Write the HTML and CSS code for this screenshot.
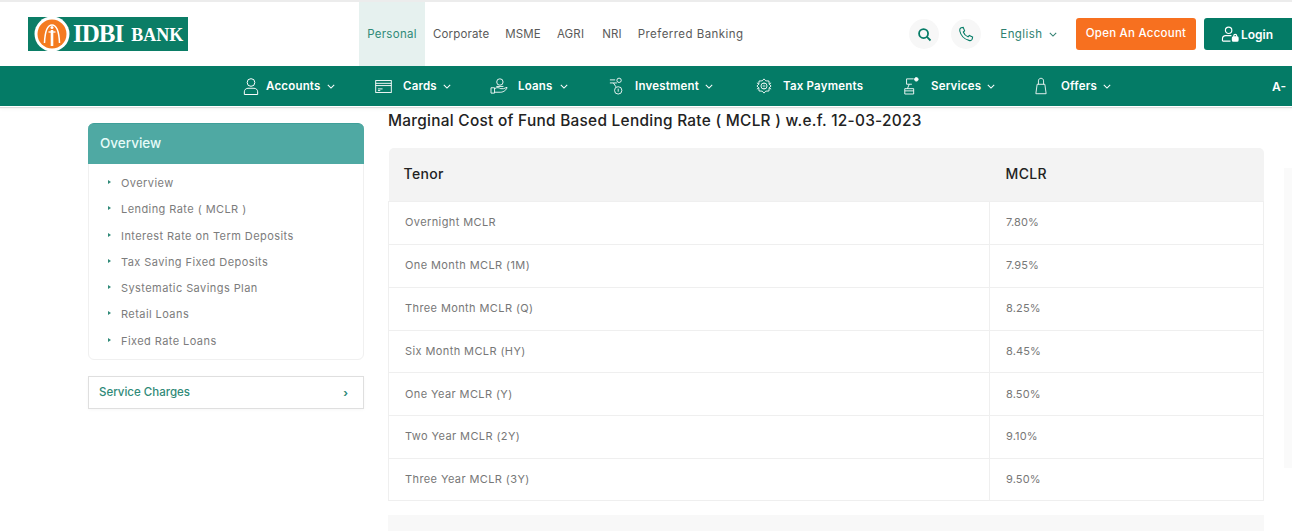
FILE: index.html
```html
<!DOCTYPE html>
<html lang="en">
<head>
    <meta charset="UTF-8">
    <meta name="viewport" content="width=device-width, initial-scale=1.0">
    <title>IDBI Bank - MCLR</title>
    <link rel="stylesheet" href="styles.css">
</head>
<body>
    <header class="top-bar">
        <a class="logo" href="#">
            <svg class="logo-mark" viewBox="0 0 36 36" width="36" height="36">
                <circle cx="18" cy="18" r="17.5" fill="#fff"/>
                <circle cx="18" cy="18" r="14.5" fill="#f47b20"/>
                <path d="M10.5 27 C11 14 14 9 18 9 C22 9 25 14 25.5 27" fill="none" stroke="#fff" stroke-width="1.5"/>
                <path d="M18 14 V30" stroke="#fff" stroke-width="2.6"/>
                <path d="M14.5 16 H21.5" stroke="#fff" stroke-width="1.3"/>
                <circle cx="18" cy="11.5" r="1.5" fill="#fff"/>
            </svg>
            <span class="logo-idbi">IDBI</span>
            <span class="logo-bank">BANK</span>
        </a>
        <nav class="segments">
            <a class="segment active" href="#">Personal</a>
            <a class="segment" href="#">Corporate</a>
            <a class="segment" href="#">MSME</a>
            <a class="segment" href="#">AGRI</a>
            <a class="segment seg-nri" href="#">NRI</a>
            <a class="segment seg-pref" href="#">Preferred Banking</a>
        </nav>
        <div class="top-actions">
            <span class="round-btn">
                <svg viewBox="0 0 16 16" width="15" height="15" fill="none" stroke="#047b66" stroke-width="1.9"><circle cx="7" cy="7" r="4.8"/><path d="M10.6 10.6 L14.4 14.4"/></svg>
            </span>
            <span class="round-btn">
                <svg viewBox="0 0 16 16" width="16" height="16" fill="none" stroke="#047b66" stroke-width="1.1"><path d="M3 1.8 L5.2 1.4 L6.6 4.8 L5.3 6 C6 8 7.8 10 10 10.8 L11.3 9.5 L14.6 11 L14.2 13.2 C13.8 14.4 12.4 14.8 11 14.4 C6.6 13.2 2.8 9.4 1.8 5 C1.5 3.6 2 2.4 3 1.8 Z"/></svg>
            </span>
            <a class="lang" href="#">English <svg class="chev" viewBox="0 0 10 6" width="8" height="5"><path d="M1 1 L5 5 L9 1" fill="none" stroke="currentColor" stroke-width="1.3"/></svg></a>
            <a class="btn-open" href="#">Open An Account</a>
            <a class="btn-login" href="#">
                <svg viewBox="0 0 20 18" width="19" height="17" fill="none" stroke="#fff" stroke-width="1.2"><circle cx="8" cy="4.6" r="3.4"/><path d="M1.5 16 V13.5 C1.5 11.5 3 10.2 5 10.2 H11 M1.5 16 H10"/><rect x="12" y="11.5" width="6" height="4.5" rx="1" fill="#fff"/><path d="M13.5 11.5 V10 C13.5 8.4 16.5 8.4 16.5 10 V11.5"/></svg>
                Login
            </a>
        </div>
    </header>

    <nav class="main-nav">
        <ul class="nav-list">
            <li class="nav-item w-accounts">
                <svg viewBox="0 0 18 20" width="16" height="19" fill="none" stroke="#fff" stroke-width="1.1"><circle cx="9" cy="5.5" r="4.3"/><path d="M1.5 19 V16 C1.5 13.6 3.4 12 5.6 12 H12.4 C14.6 12 16.5 13.6 16.5 16 V19 Z"/></svg>
                Accounts <svg class="chev" viewBox="0 0 10 6" width="8" height="5"><path d="M1 1 L5 5 L9 1" fill="none" stroke="currentColor" stroke-width="1.3"/></svg>
            </li>
            <li class="nav-item w-cards">
                <svg viewBox="0 0 18 14" width="17" height="13" fill="none" stroke="#fff" stroke-width="1"><rect x="0.6" y="0.6" width="16.8" height="12.8"/><path d="M0.6 3.6 H17.4 M0.6 6 H17.4 M3 9.6 H8 M3 11.4 H5.5"/></svg>
                Cards <svg class="chev" viewBox="0 0 10 6" width="8" height="5"><path d="M1 1 L5 5 L9 1" fill="none" stroke="currentColor" stroke-width="1.3"/></svg>
            </li>
            <li class="nav-item w-loans">
                <svg viewBox="0 0 20 18" width="18" height="16" fill="none" stroke="#fff" stroke-width="1"><circle cx="11" cy="4.5" r="3.6"/><path d="M7 9.5 H15 M1 11 H5 V17 H1 Z M5 12 C8 10 10 11 12 12 H15 L19 10.5 C19 13 15 16 12 16 H5"/></svg>
                Loans <svg class="chev" viewBox="0 0 10 6" width="8" height="5"><path d="M1 1 L5 5 L9 1" fill="none" stroke="currentColor" stroke-width="1.3"/></svg>
            </li>
            <li class="nav-item w-invest">
                <svg viewBox="0 0 16 20" width="14" height="18" fill="none" stroke="#fff" stroke-width="1"><circle cx="11.5" cy="3.5" r="2.5"/><circle cx="10.5" cy="15" r="4.2"/><path d="M1 3 H7 M1 6.5 H9 M5 6.5 L8 11 M10.5 13 V16.5"/></svg>
                Investment <svg class="chev" viewBox="0 0 10 6" width="8" height="5"><path d="M1 1 L5 5 L9 1" fill="none" stroke="currentColor" stroke-width="1.3"/></svg>
            </li>
            <li class="nav-item w-tax">
                <svg viewBox="0 0 18 18" width="16" height="16" fill="none" stroke="#fff" stroke-width="1"><circle cx="9" cy="9" r="3.4"/><path d="M9 5.6 V7 M9 11 V12.4 M7.5 9 H10.5"/><path d="M9 1 L11 3.2 L14.6 3.4 L14.8 7 L17 9 L14.8 11 L14.6 14.6 L11 14.8 L9 17 L7 14.8 L3.4 14.6 L3.2 11 L1 9 L3.2 7 L3.4 3.4 L7 3.2 Z"/><path d="M1 5.5 L3.4 7 M17 5.5 L14.8 7 M1 12.5 L3.2 11 M17 12.5 L14.8 11"/></svg>
                Tax Payments
            </li>
            <li class="nav-item w-services">
                <svg viewBox="0 0 18 20" width="16" height="18" fill="none" stroke="#fff" stroke-width="1"><path d="M2 13 H12 V19 H2 Z M4 2 H12 M4 2 V8 H10 M5 13 L7 8 M2 15.5 H12"/><circle cx="15" cy="2.5" r="2" fill="#fff"/></svg>
                Services <svg class="chev" viewBox="0 0 10 6" width="8" height="5"><path d="M1 1 L5 5 L9 1" fill="none" stroke="currentColor" stroke-width="1.3"/></svg>
            </li>
            <li class="nav-item w-offers">
                <svg viewBox="0 0 14 20" width="12" height="18" fill="none" stroke="#fff" stroke-width="1"><path d="M2.5 8 L1 19 H13 L11.5 8 Z M4 8 V4 C4 0 10 0 10 4 V8"/></svg>
                Offers <svg class="chev" viewBox="0 0 10 6" width="8" height="5"><path d="M1 1 L5 5 L9 1" fill="none" stroke="currentColor" stroke-width="1.3"/></svg>
            </li>
        </ul>
        <span class="font-size">A-</span>
    </nav>

    <main class="page">
        <aside class="sidebar">
            <div class="side-card">
                <h3 class="side-title">Overview</h3>
                <ul class="side-list">
                    <li>Overview</li>
                    <li>Lending Rate ( MCLR )</li>
                    <li>Interest Rate on Term Deposits</li>
                    <li>Tax Saving Fixed Deposits</li>
                    <li>Systematic Savings Plan</li>
                    <li>Retail Loans</li>
                    <li>Fixed Rate Loans</li>
                </ul>
            </div>
            <a class="side-link" href="#">Service Charges <span class="side-arrow">›</span></a>
        </aside>

        <section class="content">
            <h2 class="page-title">Marginal Cost of Fund Based Lending Rate ( MCLR ) w.e.f. 12-03-2023</h2>
            <table class="rates">
                <thead>
                    <tr><th>Tenor</th><th>MCLR</th></tr>
                </thead>
                <tbody>
                    <tr><td>Overnight MCLR</td><td>7.80%</td></tr>
                    <tr><td>One Month MCLR (1M)</td><td>7.95%</td></tr>
                    <tr><td>Three Month MCLR (Q)</td><td>8.25%</td></tr>
                    <tr><td>Six Month MCLR (HY)</td><td>8.45%</td></tr>
                    <tr><td>One Year MCLR (Y)</td><td>8.50%</td></tr>
                    <tr><td>Two Year MCLR (2Y)</td><td>9.10%</td></tr>
                    <tr><td>Three Year MCLR (3Y)</td><td>9.50%</td></tr>
                </tbody>
            </table>
            <div class="next-block"></div>
        </section>
    </main>
    <div class="edge-shadow"></div>
</body>
</html>
```

FILE: styles.css
```css
html, body {
    height: 100%;
    overflow: hidden;
}

body {
    margin: 0;
    padding: 0;
    font-family: 'Inter', 'Open Sans', Arial, sans-serif;
    background-color: #fff;
    color: #555;
}

a {
    text-decoration: none;
    color: inherit;
}

ul {
    list-style: none;
    margin: 0;
    padding: 0;
}

/* Top bar */
.top-bar {
    height: 64px;
    border-top: 2px solid #ececec;
    display: flex;
    align-items: center;
    background-color: #fff;
}

.logo {
    width: 160px;
    height: 34px;
    margin-left: 28px;
    background-color: #0b7d66;
    display: flex;
    align-items: center;
    color: #fff;
    font-family: 'Liberation Serif', serif;
    font-weight: bold;
    flex-shrink: 0;
}

.logo-mark {
    margin-left: 6px;
    flex-shrink: 0;
}

.logo-idbi {
    font-size: 25px;
    margin-left: 3px;
    letter-spacing: -1px;
}

.logo-bank {
    font-size: 18px;
    margin-left: 8px;
    padding-top: 2px;
}

.segments {
    display: flex;
    height: 100%;
    margin-left: 171px;
}

.segment {
    display: flex;
    align-items: center;
    font-size: 11.5px;
    color: #5a5a5a;
    padding: 0 8px;
    letter-spacing: 0.15px;
}

.segment.active {
    background-color: #e6f1ef;
    color: #2f8a78;
    width: 66px;
    padding: 0;
    justify-content: center;
    letter-spacing: 0.3px;
}

.seg-nri {
    margin-left: 2px;
}

.seg-pref {
    letter-spacing: 0.45px;
}

.top-actions {
    margin-left: auto;
    display: flex;
    align-items: center;
}

.round-btn {
    width: 30px;
    height: 30px;
    border-radius: 50%;
    background-color: #f7f7f7;
    display: flex;
    align-items: center;
    justify-content: center;
    margin-right: 12px;
}

.lang {
    font-size: 11.5px;
    color: #2f7f70;
    margin-left: 7px;
    margin-right: 19px;
    letter-spacing: 0.4px;
}

.chev {
    margin-left: 3px;
    vertical-align: 1px;
}

.btn-open {
    width: 120px;
    height: 32px;
    background-color: #f7701f;
    border-radius: 3px;
    color: #fff;
    font-size: 11.5px;
    font-weight: 500;
    letter-spacing: 0.25px;
    display: flex;
    align-items: center;
    justify-content: center;
    padding-bottom: 2px;
    box-sizing: border-box;
    margin-right: 8px;
}

.btn-login {
    width: 88px;
    height: 32px;
    background-color: #047b66;
    border-radius: 3px 0 0 3px;
    color: #fff;
    font-size: 12px;
    font-weight: 600;
    display: flex;
    align-items: center;
    padding-left: 17px;
    gap: 1px;
    box-sizing: border-box;
}

/* Green nav */
.main-nav {
    height: 40px;
    background-color: #047b66;
    display: flex;
    align-items: center;
    box-shadow: 0 1px 0 #fff, 0 2px 1px #ddd, 0 3px 4px rgba(0,0,0,0.04);
    position: relative;
    color: #fff;
}

.nav-list {
    display: flex;
    align-items: center;
    margin-left: 243px;
}

.nav-item {
    display: flex;
    align-items: center;
    font-size: 11.5px;
    font-weight: 600;
    letter-spacing: 0.2px;
    gap: 10px;
    white-space: nowrap;
}

.nav-item .chev {
    margin-left: -3px;
    vertical-align: 0;
}

.w-accounts { width: 132px; gap: 7px; }
.w-accounts .chev { margin-left: -1px; }
.w-cards { width: 115px; gap: 11px; }
.w-cards .chev { margin-left: -5px; }
.w-loans { width: 119px; }
.w-invest { width: 147px; gap: 12px; }
.w-invest .chev { margin-left: -6px; }
.w-tax { width: 147px; gap: 11px; }
.w-services { width: 132px; gap: 12px; }
.w-services .chev { margin-left: -6px; }
.w-offers { width: 100px; gap: 14px; }
.w-offers .chev { margin-left: -8px; }

.font-size {
    margin-left: auto;
    margin-right: 6px;
    font-size: 12px;
    font-weight: 600;
}

/* Page body */
.page {
    display: flex;
    padding-left: 88px;
    padding-right: 28px;
}

.sidebar {
    width: 276px;
    margin-top: 17px;
    flex-shrink: 0;
}

.side-card {
    border: 1px solid #f0f0f0;
    border-radius: 6px;
    padding-bottom: 5px;
}

.side-title {
    margin: -1px -1px 0;
    height: 41px;
    line-height: 39px;
    padding-left: 12px;
    background-color: #4fa9a3;
    border-top: 1px solid #3f9f99;
    box-sizing: border-box;
    border-radius: 6px 6px 0 0;
    color: #e6fbf8;
    font-size: 13.5px;
    font-weight: 500;
}

.side-list {
    padding-top: 6px;
}

.side-list li {
    height: 26.3px;
    line-height: 26.3px;
    padding-left: 32px;
    font-size: 11px;
    color: #7c7c7c;
    letter-spacing: 0.43px;
    position: relative;
}

.side-list li::before {
    content: "";
    position: absolute;
    left: 19px;
    top: 10px;
    border-left: 3px solid #2f8a78;
    border-top: 2.5px solid transparent;
    border-bottom: 2.5px solid transparent;
}

.side-link {
    display: flex;
    justify-content: space-between;
    align-items: center;
    margin-top: 16px;
    height: 33px;
    border: 1px solid #dfdfdf;
    box-sizing: border-box;
    padding: 0 15px 2px 10px;
    color: #2f8a78;
    font-size: 11.5px;
    font-weight: 500;
    box-shadow: 0 1px 3px rgba(0,0,0,0.03);
}

.side-arrow {
    font-size: 11px;
    font-weight: 700;
    padding-top: 3px;
}

.content {
    flex: 1;
    margin-left: 24px;
    min-width: 0;
}

.page-title {
    margin: 5px 0 0;
    height: 37px;
    font-size: 15.4px;
    line-height: 20px;
    font-weight: 500;
    letter-spacing: 0.28px;
    color: #222;
}

.rates {
    width: 100%;
    border-collapse: collapse;
    table-layout: fixed;
}

.rates th {
    height: 53px;
    background-color: #f3f3f3;
    text-align: left;
    padding: 0 0 1px 16px;
    font-size: 14px;
    font-weight: 500;
    letter-spacing: 0.35px;
    color: #222;
    box-sizing: border-box;
}

.rates th:first-child {
    width: 601px;
    padding-left: 15px;
    border-top-left-radius: 5px;
}

.rates th:last-child {
    border-top-right-radius: 5px;
}

.rates td {
    height: 42.7px;
    box-sizing: border-box;
    border: 1px solid #efefef;
    padding: 0 0 1px 16px;
    font-size: 11px;
    color: #777;
    letter-spacing: 0.15px;
}

.rates tr:nth-child(-n+3) td {
    height: 43px;
}

.rates td:first-child {
    letter-spacing: 0.4px;
}

.next-block {
    margin-top: 14px;
    height: 40px;
    background-color: #f8f8f8;
}

.edge-shadow {
    position: absolute;
    top: 168px;
    right: 0;
    width: 8px;
    height: 300px;
    background-color: #fafafa;
}
```
